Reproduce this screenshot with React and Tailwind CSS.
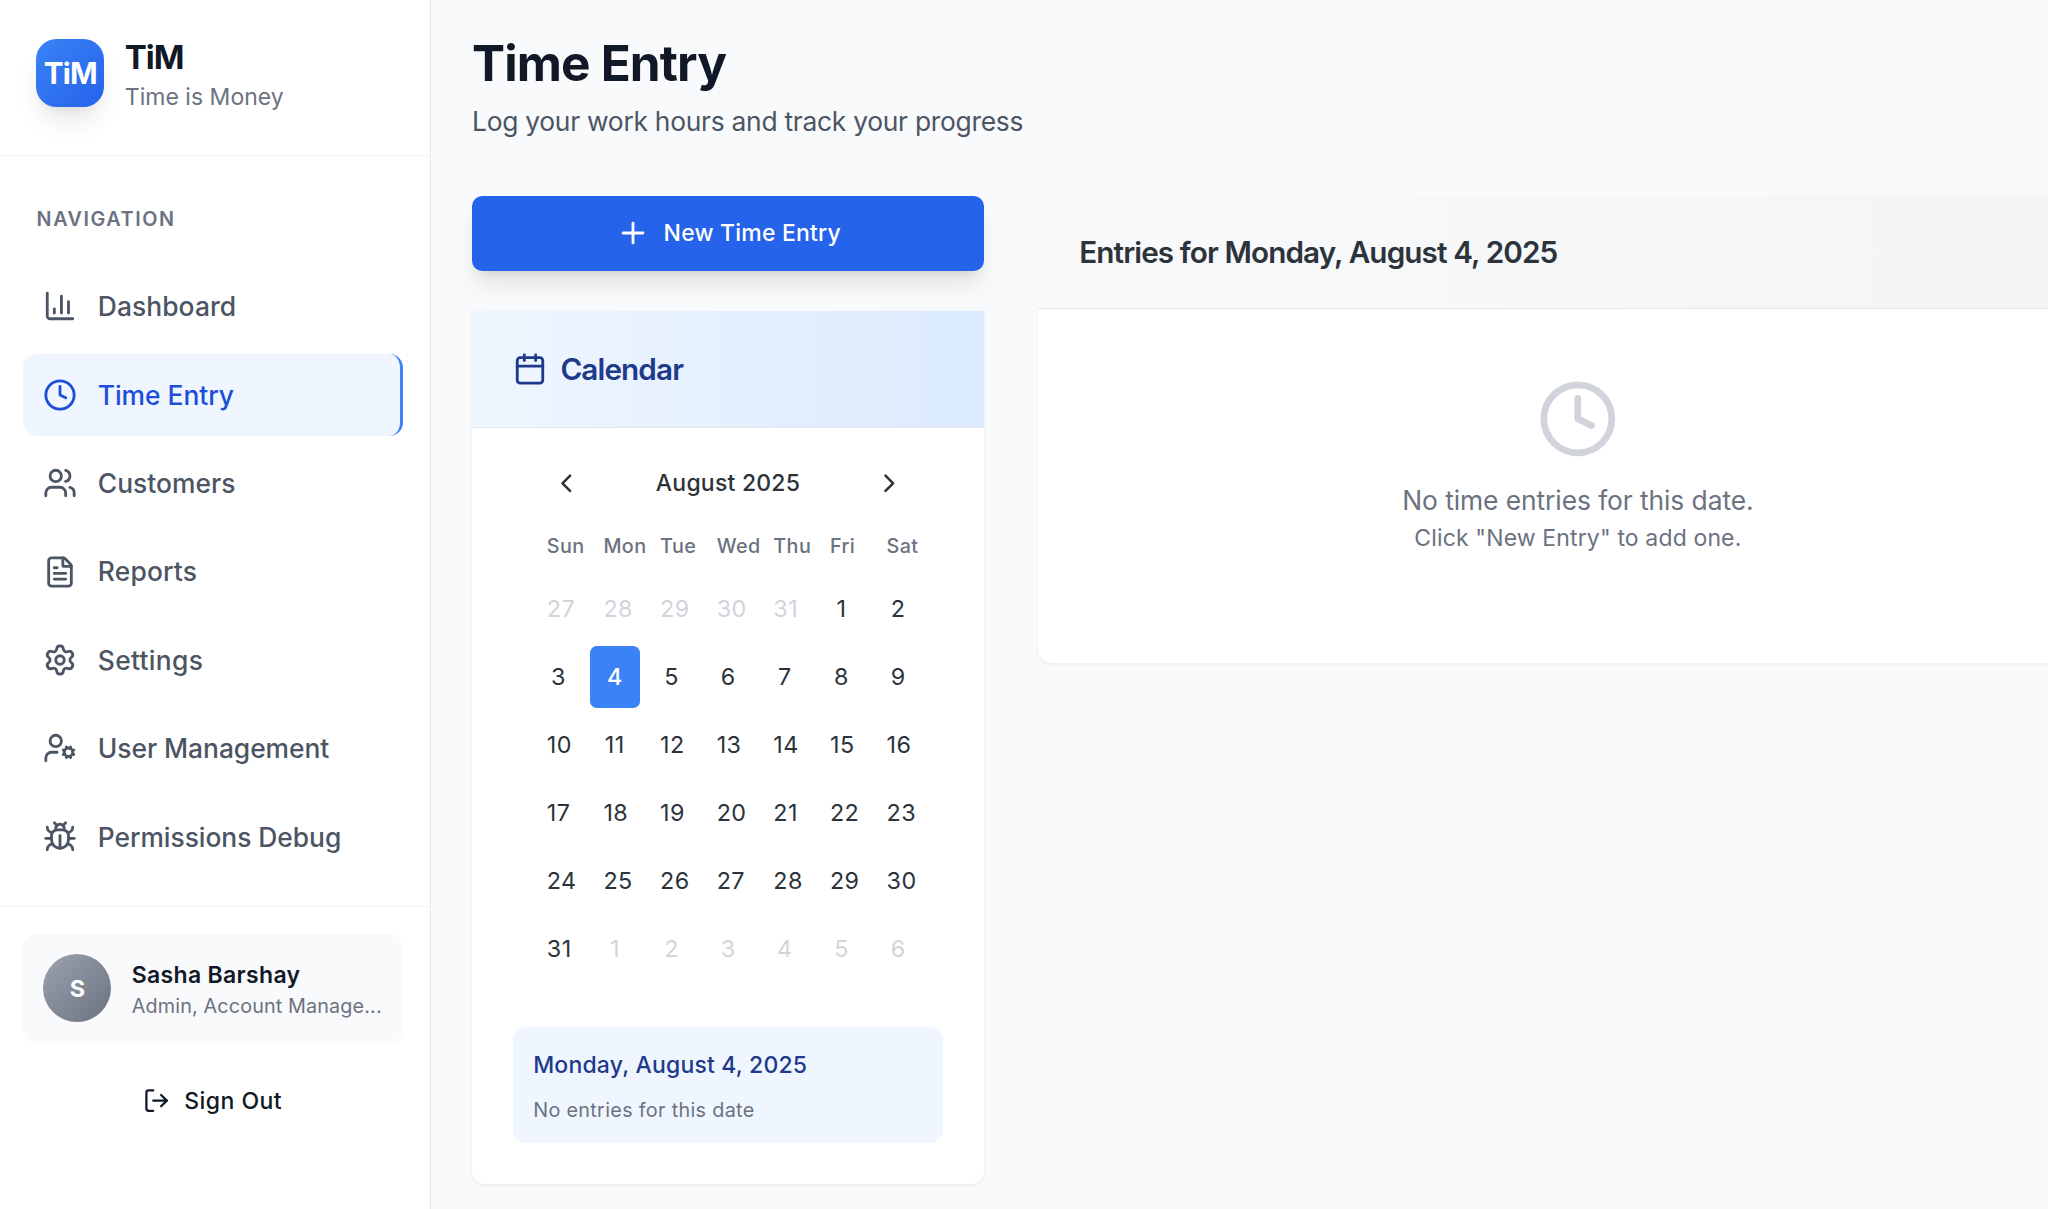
import React from "react";
import {
  Bug,
  Calendar,
  ChartColumn,
  ChevronLeft,
  ChevronRight,
  Clock,
  FileText,
  LogOut,
  Plus,
  Settings,
  UserCog,
  Users,
} from "lucide-react";

const NAV = [
  { label: "Dashboard", icon: ChartColumn, tracking: "tracking-[0.003em]" },
  { label: "Time Entry", icon: Clock, active: true, tracking: "tracking-[-0.001em]" },
  { label: "Customers", icon: Users, tracking: "tracking-[0.001em]" },
  { label: "Reports", icon: FileText, tracking: "tracking-[0.007em]" },
  { label: "Settings", icon: Settings, tracking: "tracking-[0.012em]" },
  { label: "User Management", icon: UserCog, tracking: "tracking-[-0.0016em]" },
  { label: "Permissions Debug", icon: Bug, tracking: "tracking-[-0.0015em]" },
];

const WEEKDAYS = ["Sun", "Mon", "Tue", "Wed", "Thu", "Fri", "Sat"];

// Six weeks starting Sunday, July 27, 2025.
const DAYS = Array.from({ length: 42 }, (_, i) => {
  if (i < 5) return { day: 27 + i, outside: true };
  if (i < 36) return { day: i - 4, outside: false };
  return { day: i - 35, outside: true };
});

function NavItem({ label, icon: Icon, active, tracking }) {
  return (
    <a
      className={
        "flex h-[81.6px] items-center gap-[20.4px] rounded-[13.6px] pl-[20.4px] text-[26.4px] font-medium " +
        tracking +
        (active
          ? " border-r-[3.4px] border-[#3b82f6] bg-[#eff6ff] text-[#1d4ed8]"
          : " text-[#4b5563]")
      }
    >
      <Icon className="size-[34px] shrink-0" />
      <span className="pt-px">{label}</span>
    </a>
  );
}

function Sidebar() {
  return (
    <aside className="flex w-[431px] shrink-0 flex-col border-r-[1.7px] border-[#e5e7eb] bg-white">
      <div className="flex items-center gap-[20.4px] border-b-[1.7px] border-[#f3f4f6] pt-[32.5px] pr-6 pb-[41.2px] pl-[36.4px]">
        <div className="flex size-[68px] items-center justify-center rounded-[20.4px] bg-linear-to-br from-[#3b82f6] to-[#2563eb] text-[29.7px] font-bold tracking-[-0.025em] text-white shadow-[0_17px_25.5px_-5.1px_rgba(0,0,0,0.1),0_6.8px_10.2px_-6.8px_rgba(0,0,0,0.1)]">
          TiM
        </div>
        <div>
          <div className="pt-px text-[33px] leading-[46.6px] font-bold tracking-[-0.03em] text-[#111827]">
            TiM
          </div>
          <div className="text-[23px] leading-[34px] tracking-[0.001em] text-[#6b7280]">
            Time is Money
          </div>
        </div>
      </div>

      <nav className="flex flex-col pt-[42.6px] pr-[27.5px] pb-[28px] pl-[23px]">
        <div className="mb-[26px] py-[6.8px] pl-[13.6px] text-[19.8px] leading-[27.2px] font-semibold tracking-[0.0777em] text-[#6b7280]">
          NAVIGATION
        </div>
        <div className="flex flex-col gap-[6.8px]">
          {NAV.map((item) => (
            <NavItem key={item.label} {...item} />
          ))}
        </div>
      </nav>

      <div className="flex flex-col gap-[27.2px] border-t-[1.7px] border-[#f3f4f6] pt-[27.2px] pr-[27.5px] pl-[23px]">
        <div className="flex h-[108.8px] items-center gap-[20.4px] rounded-[13.6px] bg-[#f9fafb] px-[20.4px]">
          <div className="flex size-[68px] shrink-0 items-center justify-center rounded-full bg-linear-to-br from-[#9ca3af] to-[#6b7280] text-[23.4px] font-bold text-white">
            S
          </div>
          <div className="pt-[1.4px] whitespace-nowrap">
            <div className="text-[23px] leading-[34px] font-semibold tracking-[0.014em] text-[#111827]">
              Sasha Barshay
            </div>
            <div className="pt-px text-[19.8px] leading-[26.4px] tracking-[0.0065em] text-[#6b7280]">
              Admin, Account Manage...
            </div>
          </div>
        </div>
        <button className="flex h-[62px] items-center justify-center gap-[13.6px] text-[23px] font-medium tracking-[0.0196em] text-[#111827]">
          <LogOut className="size-[27.2px]" />
          Sign Out
        </button>
      </div>
    </aside>
  );
}

function CalendarCard() {
  return (
    <section className="rounded-b-[13.6px] bg-white shadow-[0_1.7px_3.4px_0_rgba(0,0,0,0.05)]">
      <header className="flex items-center gap-[13.6px] border-b-[1.7px] border-[#e5e7eb] bg-linear-to-r from-[#eff6ff] to-[#dbeafe] p-[40.8px] text-[#1e3a8a]">
        <Calendar className="size-[34px]" />
        <h2 className="text-[29.7px] leading-[34px] font-semibold tracking-[-0.03em]">
          Calendar
        </h2>
      </header>
      <div className="px-[40.8px] pt-[31.8px] pb-[41px]">
        <div className="px-[20.4px]">
          <div className="flex h-[47.6px] items-center justify-between px-[18px] text-[#2c333b]">
            <ChevronLeft className="size-[30.6px]" />
            <span className="text-[23px] font-medium tracking-[0.0093em]">August 2025</span>
            <ChevronRight className="size-[30.6px]" />
          </div>
          <div className="mt-[25.2px] grid grid-cols-7 gap-x-[6.8px] text-[19.8px] leading-[27.2px] font-medium tracking-[0.02em] text-[#6b7280]">
            {WEEKDAYS.map((d) => (
              <div key={d} className="min-w-0 pl-[13.6px]">
                {d}
              </div>
            ))}
          </div>
          <div className="mt-[18.7px] grid grid-cols-7 gap-[6.8px]">
            {DAYS.map(({ day, outside }, i) => (
              <div
                key={i}
                className={
                  "min-w-0 rounded-[6.8px] px-[13.6px] pt-px text-center text-[23.3px] leading-[60.2px] " +
                  (day > 9 ? "tracking-[0.02em] " : "") +
                  (i === 8
                    ? "bg-[#3b82f6] font-medium text-white"
                    : outside
                      ? "text-[#d1d5db]"
                      : "text-[#2c333b]")
                }
              >
                {day}
              </div>
            ))}
          </div>
        </div>
        <div className="mt-[47.3px] rounded-[13.6px] bg-[#eff6ff] px-[20.4px] pt-[21px] pb-[19.2px]">
          <div className="text-[23px] leading-[34px] font-medium tracking-[0.0081em] text-[#1e3a8a]">
            Monday, August 4, 2025
          </div>
          <div className="mt-[14.6px] text-[19.8px] leading-[27.2px] tracking-[0.0161em] text-[#6b7280]">
            No entries for this date
          </div>
        </div>
      </div>
    </section>
  );
}

function EntriesCard() {
  return (
    <section className="w-[1079px] shrink-0 self-start rounded-b-[13.6px] bg-white shadow-[0_1.7px_3.4px_0_rgba(0,0,0,0.05)]">
      <header className="border-b-[1.7px] border-[#e5e7eb] bg-linear-to-r from-[#f9fafb] to-[#f3f4f6] px-[40.8px] pt-[41.6px] pb-[40.4px]">
        <h2 className="text-[29.7px] leading-[30.6px] font-semibold tracking-[-0.03em] text-[#2c333b]">
          Entries for Monday, August 4, 2025
        </h2>
      </header>
      <div className="flex flex-col items-center pt-[68.4px] pb-[108.2px] text-[#6b7280]">
        <Clock className="mb-[21px] size-[81.6px] text-[#d1d5db]" />
        <p className="text-[26.4px] leading-[40.8px] tracking-[-0.0031em]">
          No time entries for this date.
        </p>
        <p className="text-[23px] leading-[34px] tracking-[0.006em]">
          Click "New Entry" to add one.
        </p>
      </div>
    </section>
  );
}

export default function App() {
  return (
    <div className="flex h-[1209px] w-[2048px] overflow-hidden bg-[#f9fafb] font-['Inter',sans-serif]">
      <Sidebar />
      <main className="min-w-0 flex-1 overflow-hidden pt-[33.4px] pl-[41px]">
        <h1 className="text-[49.5px] leading-[61.2px] font-bold tracking-[-0.017em] text-[#111827]">
          Time Entry
        </h1>
        <p className="mt-[6.4px] text-[26.4px] leading-[40.8px] tracking-[-0.0103em] text-[#4b5563]">
          Log your work hours and track your progress
        </p>
        <div className="mt-[54px] flex gap-[54.4px]">
          <div className="flex w-[512px] shrink-0 flex-col gap-[40.8px]">
            <button className="flex h-[74.8px] items-center justify-center gap-[13.6px] rounded-[10.2px] bg-[#2563eb] pl-px text-[23px] font-medium tracking-[0.0087em] text-white shadow-[0_17px_25.5px_-5.1px_rgba(0,0,0,0.1),0_6.8px_10.2px_-6.8px_rgba(0,0,0,0.1)]">
              <Plus className="size-[34px]" />
              New Time Entry
            </button>
            <CalendarCard />
          </div>
          <EntriesCard />
        </div>
      </main>
    </div>
  );
}
